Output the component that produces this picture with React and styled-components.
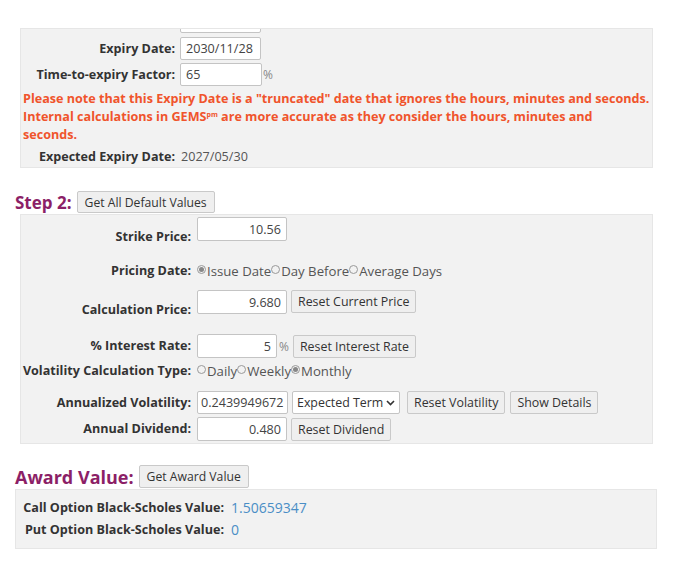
import React from 'react'
import styled, { createGlobalStyle } from 'styled-components'

const GlobalStyle = createGlobalStyle`
  body {
    margin: 0;
    background: #ffffff;
    font-family: "Open Sans", "Liberation Sans", sans-serif;
    color: #333;
  }
`

const Page = styled.div`
  width: 688px;
  height: 563px;
  overflow: hidden;
  padding-top: 28px;
  box-sizing: border-box;
`

const Panel = styled.div`
  margin-left: ${p => p.$left || 20}px;
  width: ${p => p.$width || 633}px;
  background: #f2f2f2;
  border: 1px solid #e6e6e6;
  box-sizing: border-box;
  overflow: hidden;
  padding: ${p => p.$pad || '0 0 1px 1px'};
  display: flex;
  flex-direction: column;
`

const Row = styled.div`
  display: flex;
  align-items: ${p => p.$align || 'center'};
  margin-top: ${p => p.$mt || 0}px;
  height: ${p => p.$h}px;
  gap: ${p => p.$gap ?? 5}px;
`

const Label = styled.div`
  width: ${p => p.$w}px;
  flex-shrink: 0;
  text-align: right;
  font-size: 12.6px;
  font-weight: 700;
  line-height: 18px;
  color: #333;
  white-space: nowrap;
  align-self: ${p => p.$self || 'auto'};
`

const Input = styled.div`
  width: ${p => p.$w}px;
  height: ${p => p.$h || 23}px;
  box-sizing: border-box;
  background: #fff;
  border: 1px solid #c4c4c4;
  border-radius: 2px;
  font-size: 12.6px;
  color: #444;
  display: flex;
  align-items: center;
  justify-content: ${p => (p.$right ? 'flex-end' : 'flex-start')};
  padding: 0 5px;
  flex-shrink: 0;
`

const Unit = styled.span`
  font-size: 12px;
  color: #888;
  margin-left: -4px;
`

const Button = styled.div`
  height: ${p => p.$h || 23}px;
  box-sizing: border-box;
  padding: 0 ${p => p.$px || 6}px;
  background: #efefef;
  border: 1px solid #c9c9c9;
  border-radius: 2px;
  font-size: ${p => p.$fs || 12.4}px;
  color: #333;
  display: flex;
  align-items: center;
  white-space: nowrap;
`

const Select = styled.div`
  width: 108px;
  height: 23px;
  box-sizing: border-box;
  background: #fff;
  border: 1px solid #c4c4c4;
  border-radius: 2px;
  font-size: 12.4px;
  color: #333;
  display: flex;
  align-items: center;
  justify-content: space-between;
  padding: 0 4px 0 4px;
  white-space: nowrap;
`

const Note = styled.div`
  margin-top: 4px;
  padding-left: 1px;
  font-size: 12.6px;
  font-weight: 700;
  line-height: 18px;
  color: #f0542c;
  white-space: nowrap;
  sup {
    font-size: 7px;
    vertical-align: 4px;
    line-height: 0;
  }
`

const Value = styled.span`
  color: ${p => (p.$blue ? '#4a8ec6' : '#555')};
  line-height: 18px;
  font-size: ${p => p.$fs || 12.6}px;
`

const Radios = styled.div`
  display: flex;
  align-items: center;
  font-size: 13.2px;
  color: #555;
`

const RadioItem = styled.span`
  display: flex;
  align-items: center;
`

const Dot = styled.span`
  width: 9px;
  height: 9px;
  border-radius: 50%;
  border: 1px solid #999;
  box-sizing: border-box;
  margin-right: 1px;
  margin-top: -3px;
  display: inline-flex;
  align-items: center;
  justify-content: center;
  &::after {
    content: '';
    width: 5px;
    height: 5px;
    border-radius: 50%;
    background: ${p => (p.$on ? '#888' : 'transparent')};
  }
`

const HeadRow = styled.div`
  display: flex;
  align-items: center;
  margin-left: 15px;
  margin-top: ${p => p.$mt}px;
  height: ${p => p.$h}px;
  gap: 5px;
`

const Heading = styled.span`
  font-size: ${p => p.$fs}px;
  font-weight: 700;
  color: #8c1f67;
  line-height: 1;
`

function Radio({ options, checked }) {
  return (
    <Radios>
      {options.map(o => (
        <RadioItem key={o}>
          <Dot $on={o === checked} />
          {o}
        </RadioItem>
      ))}
    </Radios>
  )
}

const Chevron = () => (
  <svg width="9" height="6" viewBox="0 0 9 6">
    <path d="M1 1 L4.5 4.5 L8 1" fill="none" stroke="#333" strokeWidth="1.6" />
  </svg>
)

export default function App() {
  return (
    <Page>
      <GlobalStyle />
      <Panel>
        <Row $mt={-19} $h={23}>
          <Label $w={153} />
          <Input $w={81} />
        </Row>
        <Row $mt={4} $h={23}>
          <Label $w={153}>Expiry Date:</Label>
          <Input $w={81}>2030/11/28</Input>
        </Row>
        <Row $mt={3} $h={23}>
          <Label $w={153}>Time-to-expiry Factor:</Label>
          <Input $w={82}>65</Input>
          <Unit>%</Unit>
        </Row>
        <Note>
          Please note that this Expiry Date is a "truncated" date that ignores the hours, minutes and seconds.
          <br />
          Internal calculations in GEMS<sup>pm</sup> are more accurate as they consider the hours, minutes and
          <br />
          seconds.
        </Note>
        <Row $mt={4} $h={18} $gap={6}>
          <Label $w={153}>Expected Expiry Date:</Label>
          <Value>2027/05/30</Value>
        </Row>
      </Panel>

      <HeadRow $mt={22} $h={24}>
        <Heading $fs={17}>Step 2:</Heading>
        <Button $fs={12.2} $px={7} $h={22}>Get All Default Values</Button>
      </HeadRow>

      <Panel $pad="0 0 2px 1px">
        <Row $mt={2} $h={29} $align="flex-start" $gap={6}>
          <Label $w={169} $self="flex-end">Strike Price:</Label>
          <Input $w={90} $h={24} $right>10.56</Input>
        </Row>
        <Row $mt={16} $h={18} $gap={6}>
          <Label $w={169}>Pricing Date:</Label>
          <Radio options={['Issue Date', 'Day Before', 'Average Days']} checked="Issue Date" />
        </Row>
        <Row $mt={10} $h={29} $align="flex-start" $gap={6}>
          <Label $w={169} $self="flex-end">Calculation Price:</Label>
          <Input $w={90} $h={24} $right>9.680</Input>
          <Button style={{ marginLeft: -2 }}>Reset Current Price</Button>
        </Row>
        <Row $mt={15} $h={24} $gap={6}>
          <Label $w={169}>% Interest Rate:</Label>
          <Input $w={80} $h={24} $right>5</Input>
          <Unit>%</Unit>
          <Button style={{ marginLeft: -2 }}>Reset Interest Rate</Button>
        </Row>
        <Row $mt={4} $h={18} $gap={6}>
          <Label $w={169}>Volatility Calculation Type:</Label>
          <Radio options={['Daily', 'Weekly', 'Monthly']} checked="Monthly" />
        </Row>
        <Row $mt={11} $h={23} $gap={6}>
          <Label $w={169}>Annualized Volatility:</Label>
          <Input $w={91} $h={23} style={{ paddingLeft: 3 }}>0.2439949672</Input>
          <Select style={{ marginLeft: -2 }}>
            Expected Term <Chevron />
          </Select>
          <Button style={{ marginLeft: 1 }}>Reset Volatility</Button>
          <Button style={{ marginLeft: -1 }}>Show Details</Button>
        </Row>
        <Row $mt={3} $h={24} $gap={6}>
          <Label $w={169}>Annual Dividend:</Label>
          <Input $w={90} $h={24} $right>0.480</Input>
          <Button style={{ marginLeft: -2 }}>Reset Dividend</Button>
        </Row>
      </Panel>

      <HeadRow $mt={20} $h={25}>
        <Heading $fs={18}>Award Value:</Heading>
        <Button $fs={12.2} $px={7} $h={23}>Get Award Value</Button>
      </HeadRow>

      <Panel $left={15} $width={642} $pad="7px 0 7px 0">
        <Row $h={22} $gap={7}>
          <Label $w={208}>Call Option Black-Scholes Value:</Label>
          <Value $blue $fs={14}>1.50659347</Value>
        </Row>
        <Row $h={22} $gap={7}>
          <Label $w={208}>Put Option Black-Scholes Value:</Label>
          <Value $blue $fs={14}>0</Value>
        </Row>
      </Panel>
    </Page>
  )
}
